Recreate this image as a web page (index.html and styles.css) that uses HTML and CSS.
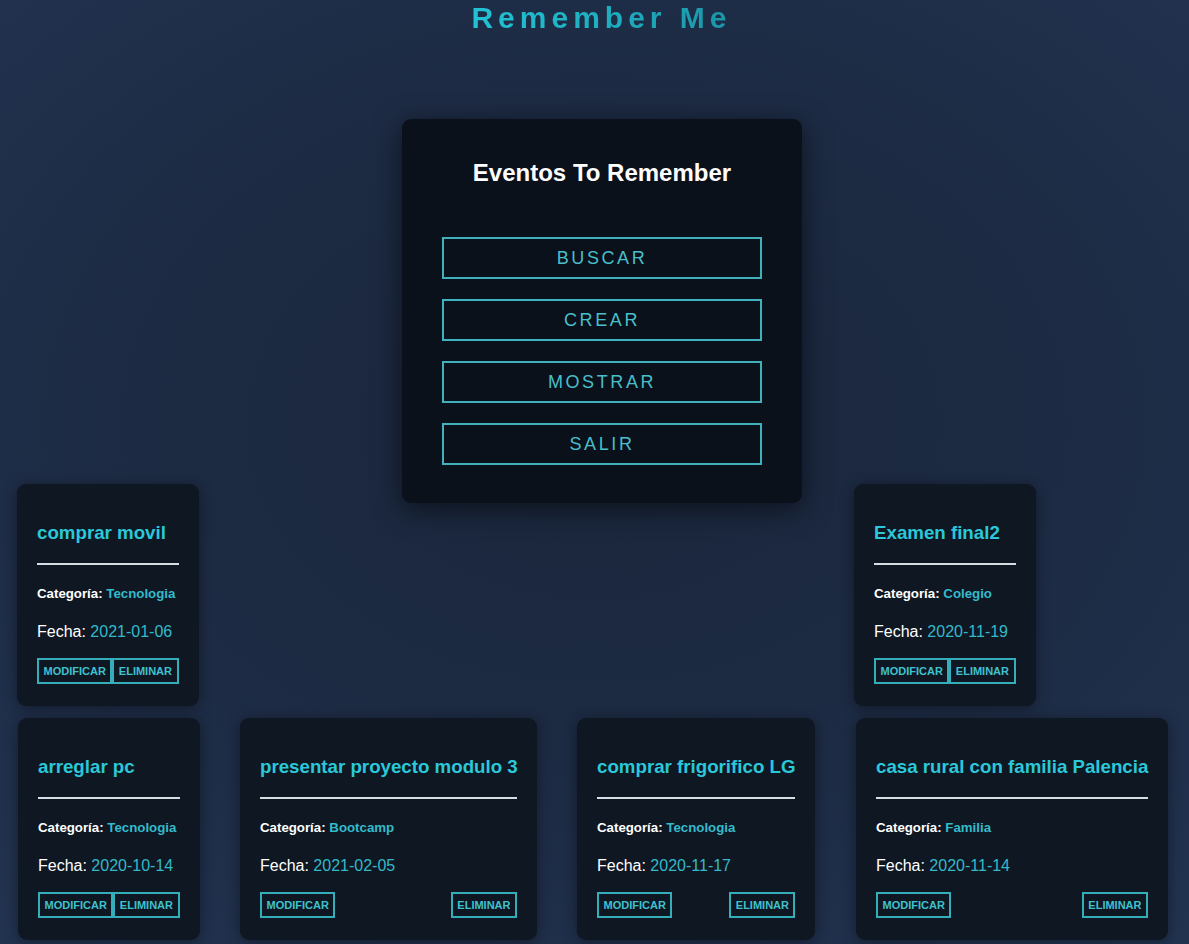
FILE: index.html
```html
<!DOCTYPE html>
<html lang="es">
<head>
<meta charset="utf-8">
<title>Remember Me</title>
<link rel="stylesheet" href="styles.css">
</head>
<body>
<h1 class="brand">Remember Me</h1>
<main class="board">
  <section class="menu">
    <h2 class="menu-title">Eventos To Remember</h2>
    <nav class="menu-list">
      <button class="menu-btn">BUSCAR</button>
      <button class="menu-btn">CREAR</button>
      <button class="menu-btn">MOSTRAR</button>
      <button class="menu-btn">SALIR</button>
    </nav>
  </section>

  <article class="card card-a">
    <h3 class="card-title">comprar movil</h3>
    <hr class="card-rule">
    <p class="card-cat">Categoría: <span class="val">Tecnologia</span></p>
    <p class="card-date">Fecha: <span class="val-date">2021-01-06</span></p>
    <div class="card-actions"><button class="act">MODIFICAR</button><button class="act">ELIMINAR</button></div>
  </article>

  <article class="card card-b">
    <h3 class="card-title">Examen final2</h3>
    <hr class="card-rule">
    <p class="card-cat">Categoría: <span class="val">Colegio</span></p>
    <p class="card-date">Fecha: <span class="val-date">2020-11-19</span></p>
    <div class="card-actions"><button class="act">MODIFICAR</button><button class="act">ELIMINAR</button></div>
  </article>

  <article class="card row3">
    <h3 class="card-title">arreglar pc</h3>
    <hr class="card-rule">
    <p class="card-cat">Categoría: <span class="val">Tecnologia</span></p>
    <p class="card-date">Fecha: <span class="val-date">2020-10-14</span></p>
    <div class="card-actions"><button class="act">MODIFICAR</button><button class="act">ELIMINAR</button></div>
  </article>

  <article class="card row3">
    <h3 class="card-title">presentar proyecto modulo 3</h3>
    <hr class="card-rule">
    <p class="card-cat">Categoría: <span class="val">Bootcamp</span></p>
    <p class="card-date">Fecha: <span class="val-date">2021-02-05</span></p>
    <div class="card-actions"><button class="act">MODIFICAR</button><button class="act">ELIMINAR</button></div>
  </article>

  <article class="card row3">
    <h3 class="card-title">comprar frigorifico LG</h3>
    <hr class="card-rule">
    <p class="card-cat">Categoría: <span class="val">Tecnologia</span></p>
    <p class="card-date">Fecha: <span class="val-date">2020-11-17</span></p>
    <div class="card-actions"><button class="act">MODIFICAR</button><button class="act">ELIMINAR</button></div>
  </article>

  <article class="card row3">
    <h3 class="card-title">casa rural con familia Palencia</h3>
    <hr class="card-rule">
    <p class="card-cat">Categoría: <span class="val">Familia</span></p>
    <p class="card-date">Fecha: <span class="val-date">2020-11-14</span></p>
    <div class="card-actions"><button class="act">MODIFICAR</button><button class="act">ELIMINAR</button></div>
  </article>
</main>
</body>
</html>
```

FILE: styles.css
```css
html, body {
  margin: 0;
  padding: 0;
}

body {
  min-height: 944px;
  font-family: "Liberation Sans", Arial, sans-serif;
  color: #ffffff;
  background: radial-gradient(ellipse 75% 70% at 50% 45%, #1a263b 0%, #1c2a42 45%, #1f2e49 75%, #223350 100%);
  background-color: #1d2b44;
  overflow: hidden;
}

.brand {
  margin: 0 auto;
  padding-left: 14px;
  width: max-content;
  text-align: center;
  font-size: 30px;
  line-height: 35px;
  font-weight: 700;
  letter-spacing: 5px;
  background: linear-gradient(90deg, #22c4d6 0%, #1eaec0 55%, #1a95a8 100%);
  -webkit-background-clip: text;
  background-clip: text;
  color: transparent;
}

.board {
  display: grid;
  grid-template-columns: 182px 297px 239px 312px;
  grid-template-rows: 365px 234px auto;
  column-gap: 40px;
  padding-left: 18px;
  margin-top: 84px;
}

/* Menu */
.menu {
  grid-column: 2 / 4;
  grid-row: 1 / 3;
  align-self: start;
  justify-self: start;
  margin-left: 162px;
  width: 400px;
  box-sizing: border-box;
  padding: 40px 40px 38px;
  background: #0b111a;
  border-radius: 9px;
  box-shadow: 0 6px 28px rgba(0, 0, 0, 0.55);
  position: relative;
  z-index: 1;
}

.menu-title {
  margin: 0 0 50px;
  text-align: center;
  font-size: 24px;
  line-height: 28px;
  font-weight: 700;
  color: #ffffff;
}

.menu-list {
  display: flex;
  flex-direction: column;
  gap: 20px;
}

.menu-btn {
  display: block;
  width: 320px;
  height: 42px;
  box-sizing: border-box;
  background: transparent;
  border: 2px solid #3eb1bc;
  color: #48bfca;
  font-family: "Liberation Sans", Arial, sans-serif;
  font-size: 18px;
  letter-spacing: 2.6px;
  padding: 0;
  text-align: center;
}

/* Cards */
.card {
  box-sizing: border-box;
  width: max-content;
  max-width: 100%;
  padding: 38px 20px 22px;
  background: #0f1723;
  border-radius: 9px;
  box-shadow: 0 2px 14px rgba(0, 0, 0, 0.4);
  align-self: start;
  justify-self: start;
}

.card-a {
  grid-column: 1;
  grid-row: 2;
  margin-left: -1px;
}

.card-b {
  grid-column: 4;
  grid-row: 2;
  margin-left: -2px;
}

.row3 {
  grid-row: 3;
}

.card-title {
  margin: 0 0 20px;
  font-size: 18.72px;
  line-height: 21px;
  font-weight: 700;
  color: #2ac8d9;
  white-space: nowrap;
}

.card-rule {
  margin: 0;
  height: 2px;
  border: none;
  background: #d8dde3;
}

.card-cat {
  margin: 21px 0 0;
  font-size: 13.28px;
  line-height: 15px;
  font-weight: 700;
  color: #ffffff;
  white-space: nowrap;
}

.val {
  color: #33bbcb;
}

.card-date {
  margin: 21px 0 0;
  font-size: 16px;
  line-height: 20px;
  color: #ffffff;
  white-space: nowrap;
}

.val-date {
  color: #33b9c9;
}

.card-actions {
  display: flex;
  justify-content: space-between;
  margin-top: 16px;
}

.act {
  box-sizing: border-box;
  height: 26px;
  padding: 0 4.5px;
  background: transparent;
  border: 2px solid #35aeb9;
  color: #3fc2ce;
  font-family: "Liberation Sans", Arial, sans-serif;
  font-size: 11px;
  font-weight: 700;
  line-height: 22px;
}
```
